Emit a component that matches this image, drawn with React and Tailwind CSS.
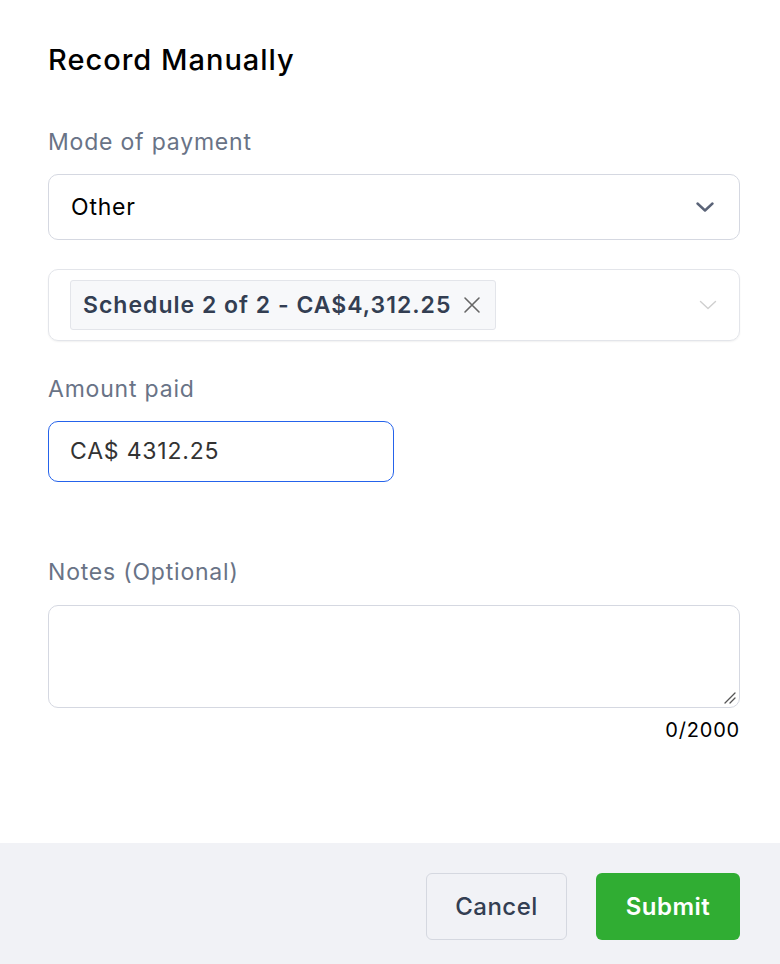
import React from "react";

function ChevronDown({ className, strokeWidth = 2 }) {
  return (
    <svg viewBox="0 0 18 10" className={className} fill="none" stroke="currentColor" strokeWidth={strokeWidth} strokeLinecap="round" strokeLinejoin="round">
      <path d="M1.5 1.5 L9 8.5 L16.5 1.5" />
    </svg>
  );
}

export default function App() {
  return (
    <div className="min-h-[964px] w-[780px] bg-white flex flex-col" style={{ fontFamily: 'Inter, "Noto Sans", sans-serif' }}>
      <div className="flex-1 pl-12 pr-10 pt-[40px]">
        <h1 className="text-[29px] leading-[40px] font-medium text-black tracking-[1px]">Record Manually</h1>

        <div className="mt-[47px] text-[23px] leading-[30px] text-[#697386] tracking-[0.8px]">Mode of payment</div>
        <div className="mt-[17px] h-[66px] rounded-[10px] border border-[#d5d8e1] flex items-center justify-between pl-[22px] pr-[25px]">
          <span className="text-[23px] text-black tracking-[0.8px]">Other</span>
          <ChevronDown className="w-[18px] h-[10px] text-[#5b6478]" strokeWidth={2.4} />
        </div>

        <div className="mt-[29px] h-[72px] rounded-[10px] border border-[#e3e5ea] shadow-[0_1px_2px_rgba(0,0,0,0.06)] flex items-center justify-between pl-[21px] pr-[22px]">
          <div className="h-[50px] flex items-center gap-[12px] bg-[#f7f8fa] border border-[#e3e5ea] rounded-[3px] pl-[12px] pr-[14px]">
            <span className="text-[23px] font-semibold text-[#333e52] tracking-[1px]">Schedule 2 of 2 - CA$4,312.25</span>
            <svg viewBox="0 0 18 18" className="w-[18px] h-[18px] text-[#666]" fill="none" stroke="currentColor" strokeWidth="1.6" strokeLinecap="round">
              <path d="M2 2 L16 16 M16 2 L2 16" />
            </svg>
          </div>
          <ChevronDown className="w-[18px] h-[10px] text-[#cfcfcf]" strokeWidth={1.4} />
        </div>

        <div className="mt-[33px] text-[23px] leading-[30px] text-[#697386] tracking-[0.8px]">Amount paid</div>
        <div className="mt-[17px] w-[346px] h-[61px] rounded-[10px] border border-[#2563eb] flex items-center pl-[21px]">
          <span className="text-[23px] text-[#333] tracking-[0.8px]">CA$ 4312.25</span>
        </div>

        <div className="mt-[75px] text-[23px] leading-[30px] text-[#697386] tracking-[0.8px]">Notes (Optional)</div>
        <div className="mt-[18px] relative h-[103px] rounded-[10px] border border-[#d5d8e1]">
          <svg viewBox="0 0 14 14" className="absolute right-[2px] bottom-[2px] w-[14px] h-[14px] text-[#555]" fill="none" stroke="currentColor" strokeWidth="1.3" strokeLinecap="round">
            <path d="M2 12 L12 2 M7 12 L12 7" />
          </svg>
        </div>
        <div className="mt-[8px] text-right text-[20px] leading-[28px] text-black tracking-[0.8px]">0/2000</div>
      </div>

      <div className="h-[121px] bg-[#f1f2f6] flex justify-end items-start pt-[30px] pr-[40px] gap-[29px]">
        <button className="h-[67px] w-[141px] rounded-[6px] border border-[#d5d8e0] bg-[#f1f2f6] text-[24px] font-medium text-[#333e52] tracking-[0.5px]">Cancel</button>
        <button className="h-[67px] w-[144px] rounded-[6px] bg-[#30ad33] text-[24px] font-semibold text-white tracking-[0.5px]">Submit</button>
      </div>
    </div>
  );
}
